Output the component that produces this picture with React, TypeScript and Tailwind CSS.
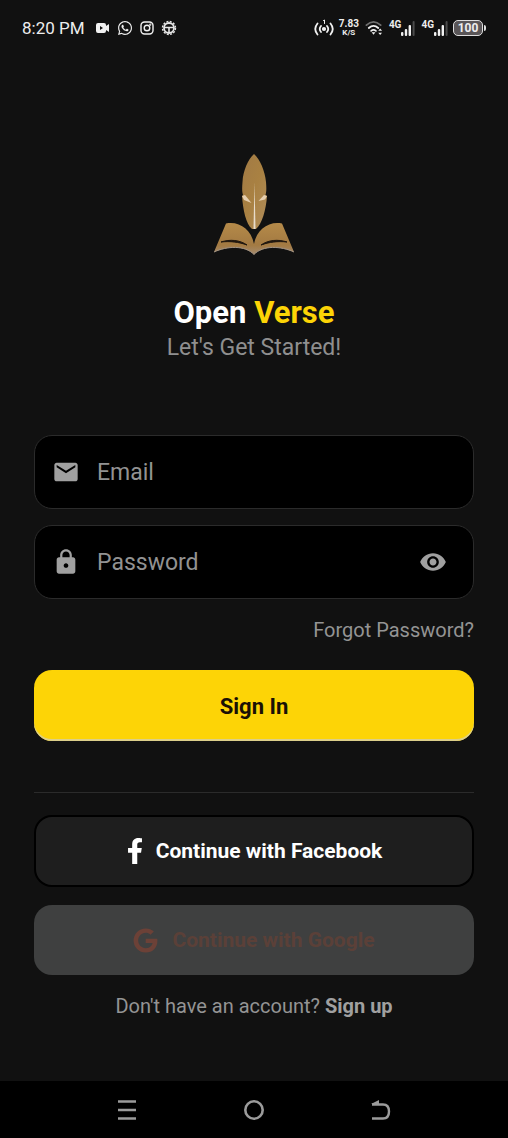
import React, { useState } from 'react';
import { MdEmail, MdLock, MdVisibility, MdVisibilityOff } from 'react-icons/md';
import { FaFacebookF, FaGoogle, FaWhatsapp } from 'react-icons/fa';

const FeatherBookLogo: React.FC = () => (
  <svg width="82" height="102" viewBox="0 0 82 102" aria-hidden="true">
    <defs>
      <linearGradient id="feather" x1="0" y1="0" x2="1" y2="1">
        <stop offset="0" stopColor="#a17a45" />
        <stop offset="0.5" stopColor="#a98142" />
        <stop offset="1" stopColor="#b08d5c" />
      </linearGradient>
      <linearGradient id="page" x1="0" y1="0" x2="0" y2="1">
        <stop offset="0" stopColor="#b58a49" />
        <stop offset="0.7" stopColor="#a37a42" />
        <stop offset="1" stopColor="#a58c70" />
      </linearGradient>
    </defs>
    {/* feather */}
    <path d="M41 0C47 5 52 17 53 28C53.500 34 53.500 38 52.500 41L54 42C53 56 49 70 43 75H39C33 70 30 56 29 42L30 41C29 38 29 34 29.500 28C30 17 35 5 41 0Z" fill="url(#feather)" />
    <path d="M29 42L32 41L38.500 49L31 46Z" fill="#e6cfb0" />
    <path d="M54 42L51 41L45.500 47L52 45.500Z" fill="#e6cfb0" />
    <path d="M41.500 28L42.500 75H40.500Z" fill="#e8dccb" />
    {/* open book */}
    <path d="M13 69.500C26 67 38 75 41 90C44 75 56 67 69 69.500L81 98C68 92 50 91 41 100.500C32 91 14 92 1 98Z" fill="url(#page)" />
    <path d="M1 98C14 92 32 91 41 100.500C50 91 68 92 81 98" fill="none" stroke="#a29384" strokeWidth="1" />
    <path d="M8 88C17 85 27 86 34 91C26 88 17 87 8 88Z" fill="#20170f" stroke="#20170f" />
    <path d="M48 91C55 86 65 85 74 88C65 87 56 88 48 91Z" fill="#20170f" stroke="#20170f" />
  </svg>
);

const SignalBars: React.FC = () => (
  <div className="flex items-end">
    <span className="self-start text-[10px] leading-[10px] font-bold">4G</span>
    <svg width="14" height="16" viewBox="0 0 14 16" aria-hidden="true">
      <g fill="#f1f1f1">
        <rect x="0" y="12" width="2.400" height="4" rx="1" />
        <rect x="3.800" y="9" width="2.400" height="7" rx="1" />
        <rect x="7.600" y="5" width="2.400" height="11" rx="1" />
      </g>
      <rect x="11.600" y="1" width="2" height="15" rx="1" fill="#4b4b4b" />
    </svg>
  </div>
);

const StatusBar: React.FC = () => (
  <header className="h-14 shrink-0 px-[22px] flex items-center justify-between text-[#ededed]">
    <div className="flex items-center gap-[7px]">
      <span className="text-[17px] leading-6 mr-1">8:20 PM</span>
      <svg width="14" height="12" viewBox="0 0 14 12" aria-hidden="true">
        <path fill="#f1f1f1" fillRule="evenodd" d="M2 1H8Q10 1 10 3V4L13 2V10L10 8V9Q10 11 8 11H2Q0 11 0 9V3Q0 1 2 1ZM4 4V8L7 6Z" />
      </svg>
      <FaWhatsapp size={16} />
      <svg width="14" height="14" viewBox="0 0 14 14" fill="none" stroke="#f1f1f1" strokeWidth="1.4" aria-hidden="true">
        <rect x="1" y="1" width="12" height="12" rx="3.5" />
        <circle cx="7" cy="7" r="2.8" />
        <circle cx="10.3" cy="3.7" r="0.4" />
      </svg>
      <svg width="16" height="16" viewBox="0 0 16 16" fill="none" stroke="#e6e6e6" aria-hidden="true">
        <circle cx="8" cy="8" r="6.5" strokeWidth="1.4" strokeDasharray="2 1.4" />
        <circle cx="8" cy="8" r="5" strokeWidth="1.8" />
        <path d="M3 7.500H13M8 8V13" strokeWidth="1.6" />
      </svg>
    </div>

    <div className="flex items-center gap-[6px]">
      <svg width="20" height="18" viewBox="0 0 20 18" fill="none" stroke="#f1f1f1" strokeWidth="1.8" strokeLinecap="round" aria-hidden="true">
        <circle cx="10" cy="10" r="1.2" fill="#f1f1f1" />
        <path d="M7 7Q4.500 10 7 13M13 7Q15.500 10 13 13M3.500 4.500Q-1 10 3.500 15.500M16.500 4.500Q21 10 16.500 15.500" />
        <path d="M9.500 1.500L10.500 1V4.500" strokeWidth="1" />
      </svg>
      <div className="-ml-px flex flex-col items-center font-bold">
        <span className="text-[10px] leading-[10px]">7.83</span>
        <span className="text-[8px] leading-2">K/S</span>
      </div>
      <svg width="18" height="16" viewBox="0 0 19 16" fill="none" strokeLinecap="round" strokeWidth="1.900" aria-hidden="true">
        <path d="M1.500 5Q9 -2 16.500 5" stroke="#6f6f6f" />
        <path d="M4 8Q9 3.500 14 8" stroke="#f1f1f1" />
        <path d="M6.500 11Q9 9 11.500 11" stroke="#f1f1f1" />
        <path d="M7 12.500H11L9 15Z" fill="#f1f1f1" />
        <path d="M14 11L16 8.500L18 11ZM14 13L16 15.500L18 13Z" fill="#f1f1f1" />
      </svg>
      <SignalBars />
      <SignalBars />
      <div className="-ml-px flex items-center">
        <span className="w-[30px] h-4 rounded-[5px] border border-[#dedede] bg-[#5a5658] flex items-center justify-center text-[12px] leading-3 font-bold">100</span>
        <span className="w-[2px] h-[6px] ml-px rounded-r bg-[#dedede]" />
      </div>
    </div>
  </header>
);

const NavigationBar: React.FC = () => (
  <nav className="h-[57px] shrink-0 bg-black px-[63px] flex items-center text-[#9b9b9b]">
    <button type="button" aria-label="Recent apps" className="flex-1 flex justify-center">
      <svg width="20" height="22" viewBox="0 0 20 22" stroke="currentColor" strokeWidth="2.400">
        <path d="M1 2.500H19M1 11H19M1 19.500H19" />
      </svg>
    </button>
    <button type="button" aria-label="Home" className="flex-1 flex justify-center">
      <svg width="22" height="22" viewBox="0 0 22 22" fill="none" stroke="currentColor" strokeWidth="2.600">
        <circle cx="11" cy="11" r="8.700" />
      </svg>
    </button>
    <button type="button" aria-label="Back" className="flex-1 flex justify-center">
      <svg width="20" height="22" viewBox="0 0 20 22" fill="none" stroke="currentColor" strokeWidth="2.400">
        <path d="M1 5.500H12Q18 5.500 18 12.500Q18 19.500 12 19.500H1" />
        <path d="M0 5L8 1V5Z" fill="currentColor" stroke="none" />
      </svg>
    </button>
  </nav>
);

const App: React.FC = () => {
  const [email, setEmail] = useState('');
  const [password, setPassword] = useState('');
  const [showPassword, setShowPassword] = useState(false);

  return (
    <div className="min-h-screen flex flex-col bg-[#111111] font-['Roboto',sans-serif]">
      <StatusBar />

      <main className="flex-1 w-full px-[34px] pt-[98px] pb-8 flex flex-col">
        <div className="flex flex-col items-center">
          <FeatherBookLogo />
          <h1 className="mt-[38px] text-[31px] leading-[38px] font-bold text-white">
            Open <span className="text-[#fdd406]">Verse</span>
          </h1>
          <p className="text-[23px] leading-8 text-[#8f8f8f]">Let's Get Started!</p>
        </div>

        <form className="mt-[71px] flex flex-col" onSubmit={(e) => e.preventDefault()}>
          <div className="h-[74px] px-[17px] flex items-center gap-[17px] rounded-[18px] border border-[#2b2b2b] bg-black text-[#a0a0a0]">
            <label htmlFor="email" aria-label="Email">
              <MdEmail size={28} />
            </label>
            <input
              id="email"
              type="email"
              placeholder="Email"
              value={email}
              onChange={(e) => setEmail(e.target.value)}
              className="flex-1 min-w-0 pt-[2px] bg-transparent text-[23px] leading-8 text-white placeholder:text-[#929292] outline-none"
            />
          </div>

          <div className="mt-4 h-[74px] pl-[17px] pr-[26px] flex items-center gap-[17px] rounded-[18px] border border-[#2b2b2b] bg-black text-[#a0a0a0]">
            <label htmlFor="password" aria-label="Password">
              <MdLock size={28} />
            </label>
            <input
              id="password"
              type={showPassword ? 'text' : 'password'}
              placeholder="Password"
              value={password}
              onChange={(e) => setPassword(e.target.value)}
              className="flex-1 min-w-0 pt-[2px] bg-transparent text-[23px] leading-8 text-white placeholder:text-[#929292] outline-none"
            />
            <button type="button" aria-label="Toggle password" onClick={() => setShowPassword(!showPassword)}>
              {showPassword ? <MdVisibilityOff size={28} /> : <MdVisibility size={28} />}
            </button>
          </div>

          <a href="#forgot" className="mt-[17px] self-end text-[20px] leading-7 text-[#949494]">Forgot Password?</a>

          <button type="submit" className="mt-[26px] h-[71px] pt-[2px] rounded-[18px] bg-[#fdd406] shadow-[inset_0_-2px_0_#dccf8a] text-[22px] leading-8 font-bold text-[#1a1005]">
            Sign In
          </button>
        </form>

        <hr className="mt-[51px] border-[#2b2b2b]" />

        <button type="button" className="mt-[22px] h-[72px] pr-1 flex items-center justify-center gap-2 rounded-[18px] border-2 border-black bg-[#1e1e1e] text-[21px] leading-8 font-bold text-white">
          <FaFacebookF size={26} />
          Continue with Facebook
        </button>

        <button type="button" className="mt-[18px] h-[70px] flex items-center justify-center gap-[14px] rounded-[18px] bg-[#3f4040] text-[21px] leading-8 font-bold text-[#5b4038]">
          <FaGoogle size={25} className="text-[#6c4137]" />
          Continue with Google
        </button>

        <p className="mt-[17px] text-center text-[20px] leading-7 text-[#949494]">
          Don't have an account? <a href="#signup" className="font-bold text-[#a0a0a0]">Sign up</a>
        </p>
      </main>

      <NavigationBar />
    </div>
  );
};

export default App;
